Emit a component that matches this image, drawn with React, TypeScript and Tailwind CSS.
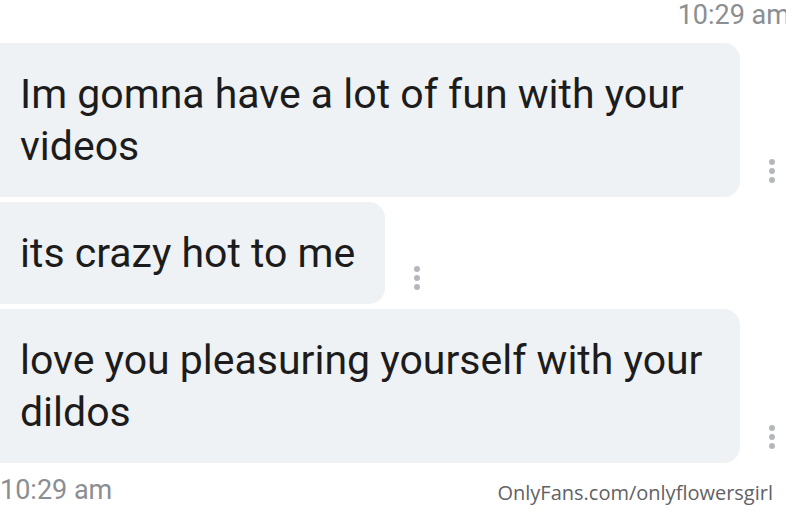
const messages = [
  { text: 'Im gomna have a lot of fun with your videos', wide: true },
  { text: 'its crazy hot to me', wide: false },
  { text: 'love you pleasuring yourself with your dildos', wide: true },
];

const MoreDots = () => (
  <div className="flex flex-col gap-[3px] ml-[29px] mb-[14px]">
    <span className="w-[6px] h-[6px] rounded-full bg-[#b4b8bc]" />
    <span className="w-[6px] h-[6px] rounded-full bg-[#b4b8bc]" />
    <span className="w-[6px] h-[6px] rounded-full bg-[#b4b8bc]" />
  </div>
);

const Bubble = ({ text, wide }: { text: string; wide: boolean }) => (
  <div className="flex items-end">
    <div
      className={`bg-[#eff2f5] rounded-r-[16px] pl-[20px] py-[25px] text-[41px] leading-[52px] text-[#1c1c1c] ${
        wide ? 'w-[740px] pr-[20px]' : 'w-fit pr-[30px]'
      }`}
    >
      {text}
    </div>
    <MoreDots />
  </div>
);

export default function App() {
  return (
    <div
      className="w-[786px] h-[521px] bg-white overflow-hidden flex flex-col"
      style={{ fontFamily: 'Roboto, "Liberation Sans", sans-serif' }}
    >
      <div className="flex justify-end -mr-[4px] h-[43px]">
        <span className="text-[27px] leading-[30px] text-[#8b8e92]">10:29 am</span>
      </div>
      <div className="flex flex-col gap-[5px]">
        {messages.map((m, i) => (
          <Bubble key={i} text={m.text} wide={m.wide} />
        ))}
      </div>
      <div className="flex items-end justify-between pt-[12px] pr-[13px]">
        <span className="text-[27px] leading-[30px] text-[#8b8e92]">10:29 am</span>
        <span
          className="text-[20px] leading-[24px] text-[#5f6265]"
          style={{ fontFamily: '"Open Sans", "DejaVu Sans", sans-serif' }}
        >
          OnlyFans.com/onlyflowersgirl
        </span>
      </div>
    </div>
  );
}
